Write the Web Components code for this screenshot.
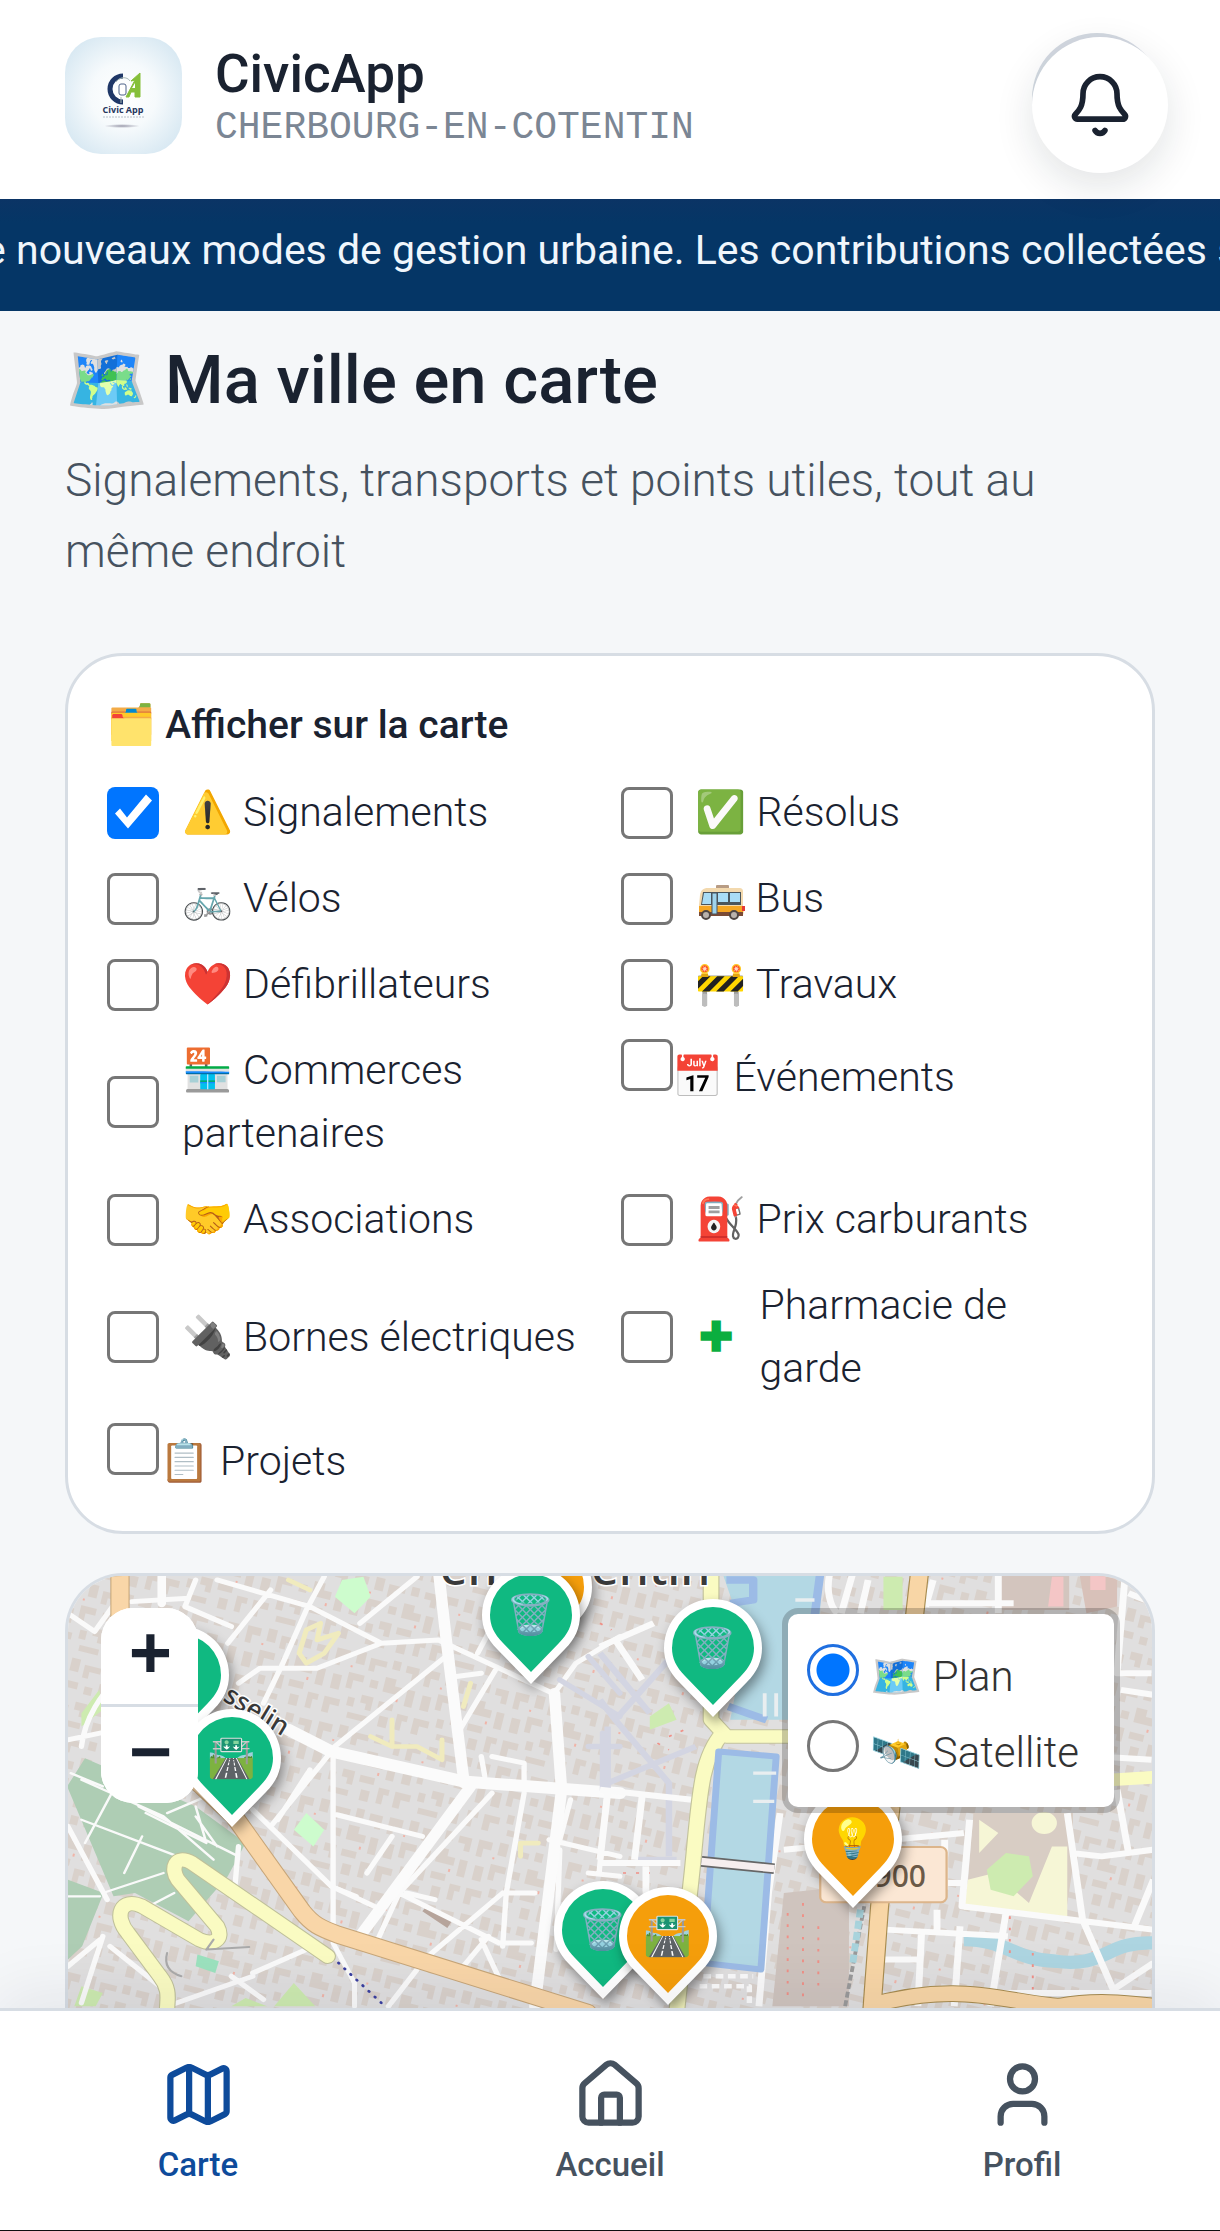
<!DOCTYPE html>
<html lang="fr">
<head>
<meta charset="UTF-8">
<meta name="viewport" content="width=device-width, initial-scale=1">
<title>CivicApp</title>
<style>
  html, body {
    height: 100%;
    margin: 0;
  }

  body {
    font-family: Roboto, "Noto Color Emoji", sans-serif;
    font-weight: 300;
    color: #1a2230;
    background: #f5f7f9;
  }
</style>
</head>
<body>
<civic-app>
  <civic-header slot="header" name="CivicApp" city="CHERBOURG-EN-COTENTIN"></civic-header>
  <news-ticker slot="header">de nouveaux modes de gestion urbaine. Les contributions collectées seront</news-ticker>
  <page-title heading="🗺️ Ma ville en carte">Signalements, transports et points utiles, tout au même endroit</page-title>
  <layer-panel heading="🗂️ Afficher sur la carte">
    <layer-toggle checked>⚠️ Signalements</layer-toggle>
    <layer-toggle>✅ Résolus</layer-toggle>
    <layer-toggle>🚲 Vélos</layer-toggle>
    <layer-toggle><bus-icon></bus-icon> Bus</layer-toggle>
    <layer-toggle>❤️ Défibrillateurs</layer-toggle>
    <layer-toggle>🚧 Travaux</layer-toggle>
    <layer-toggle>🏪 Commerces partenaires</layer-toggle>
    <layer-toggle inline>📅 Événements</layer-toggle>
    <layer-toggle>🤝 Associations</layer-toggle>
    <layer-toggle>⛽ Prix carburants</layer-toggle>
    <layer-toggle>🔌 Bornes électriques</layer-toggle>
    <layer-toggle cross>Pharmacie de garde</layer-toggle>
    <layer-toggle inline>📋 Projets</layer-toggle>
  </layer-panel>
  <city-map>
    <map-pin x="112" y="168"></map-pin>
    <map-pin x="164" y="251">🛣️</map-pin>
    <map-pin x="475" y="80" color="#f59e0b"></map-pin>
    <map-pin x="463" y="108">🗑️</map-pin>
    <map-pin x="645" y="141">🗑️</map-pin>
    <map-pin x="785" y="332" color="#f59e0b">💡</map-pin>
    <map-pin x="535" y="423">🗑️</map-pin>
    <map-pin x="600" y="429" color="#f59e0b">🛣️</map-pin>
  </city-map>
  <tab-bar slot="footer">
    <tab-item icon="map" active>Carte</tab-item>
    <tab-item icon="home">Accueil</tab-item>
    <tab-item icon="user">Profil</tab-item>
  </tab-bar>
</civic-app>

<script>
const icons = {
  map: '<path d="M14.106 5.553a2 2 0 0 0 1.788 0l3.659-1.83A1 1 0 0 1 21 4.619v12.764a1 1 0 0 1-.553.894l-4.553 2.277a2 2 0 0 1-1.788 0l-4.212-2.106a2 2 0 0 0-1.788 0l-3.659 1.83A1 1 0 0 1 3 19.381V6.618a1 1 0 0 1 .553-.894l4.553-2.277a2 2 0 0 1 1.788 0z"/><path d="M15 5.764v15"/><path d="M9 3.236v15"/>',
  home: '<path d="M15 21v-8a1 1 0 0 0-1-1h-4a1 1 0 0 0-1 1v8"/><path d="M3 10a2 2 0 0 1 .709-1.528l7-5.999a2 2 0 0 1 2.582 0l7 5.999A2 2 0 0 1 21 10v9a2 2 0 0 1-2 2H5a2 2 0 0 1-2-2z"/>',
  user: '<path d="M19 21v-2a4 4 0 0 0-4-4H9a4 4 0 0 0-4 4v2"/><circle cx="12" cy="7" r="4"/>',
  bell: '<path d="M10.268 21a2 2 0 0 0 3.464 0"/><path d="M3.262 15.326A1 1 0 0 0 4 17h16a1 1 0 0 0 .74-1.673C19.41 13.956 18 12.499 18 8A6 6 0 0 0 6 8c0 4.499-1.411 5.956-2.738 7.326"/>'
}

const icon = (name, size) => `
  <svg width="${size}" height="${size}" viewBox="0 0 24 24" fill="none" stroke="currentColor"
    stroke-width="2" stroke-linecap="round" stroke-linejoin="round" aria-hidden="true">${icons[name]}</svg>
`

const render = (element, html) => {
  const template = document.createElement('template')
  template.innerHTML = html
  element.attachShadow({mode: "open"}).append(template.content.cloneNode(true))
}

class CivicApp extends HTMLElement {
  constructor() {
    super()
    render(this, `
      <style>
        :host {
          display: flex;
          flex-direction: column;
          height: 100vh;
          box-sizing: border-box;
          border-bottom: 1px solid #111;
        }

        main {
          flex: 1;
          min-height: 0;
          overflow: hidden;
          display: flex;
          flex-direction: column;
          padding: 24px 65px 0;
        }
      </style>
      <slot name="header"></slot>
      <main><slot></slot></main>
      <slot name="footer"></slot>
    `)
  }
}

customElements.define('civic-app', CivicApp)

class CivicHeader extends HTMLElement {
  constructor() {
    super()
    render(this, `
      <style>
        :host {
          display: block;
          background: #fff;
        }

        header {
          display: flex;
          justify-content: space-between;
          align-items: flex-start;
          padding: 37px 52px 26px 65px;
        }

        .brand {
          display: flex;
          align-items: center;
          gap: 33px;
        }

        .logo {
          border-radius: 36px;
        }

        .name {
          padding-top: 3px;
          font-size: 53px;
          font-weight: 500;
          line-height: 61px;
        }

        .city {
          font-family: "Liberation Mono", monospace;
          font-size: 38px;
          font-weight: 400;
          line-height: 46px;
          color: #7b8694;
        }

        button {
          position: relative;
          display: flex;
          align-items: center;
          justify-content: center;
          width: 136px;
          height: 136px;
          padding: 0;
          border: none;
          border-radius: 50%;
          color: #1a2230;
          background: none;
          cursor: pointer;
        }

        /* ring of the resting button, then the raised white disc */
        button::before, button::after {
          content: "";
          position: absolute;
          border-radius: 50%;
        }

        button::before {
          left: 0;
          top: -4px;
          width: 130px;
          height: 130px;
          background: #d3d9e1;
        }

        button::after {
          inset: 0;
          background: #fff;
          box-shadow: 0 13px 39px rgba(20, 30, 45, .12);
        }

        button svg {
          position: relative;
          z-index: 1;
        }
      </style>
      <header>
        <div class="brand">
          <svg class="logo" width="117" height="117" viewBox="0 0 117 117" role="img" aria-label="Civic App">
            <defs>
              <radialGradient id="sky" r=".7">
                <stop offset="0" stop-color="#fff"/>
                <stop offset=".4" stop-color="#f6fafc"/>
                <stop offset="1" stop-color="#cde2ef"/>
              </radialGradient>
              <radialGradient id="shade"><stop offset="0" stop-color="#99a"/><stop offset="1" stop-color="#99a" stop-opacity="0"/></radialGradient>
            </defs>
            <rect width="117" height="117" fill="url(#sky)"/>
            <path d="M58 39a13 13 0 1 0 0 26" fill="none" stroke="#1f3767" stroke-width="5"/>
            <path d="M61 60l9-17-4 1 9-8v24h-5v-5h-4l-2 5z" fill="#85bf3a" stroke="#85bf3a" stroke-width="1"/>
            <path d="M67 51h3v-5z" fill="#fff"/>
            <rect x="54" y="47" width="7" height="11" rx="2" fill="#fff" stroke="#4d6389"/>
            <path d="M51 45c3-5 11-6 14-1M56 60v6" fill="none" stroke="#a8b9b6"/>
            <text x="58" y="76" text-anchor="middle" font-family="Open Sans, sans-serif" font-weight="700" font-size="9" fill="#27375d">Civic App</text>
            <path d="M38 80h41" stroke="#b6c0ca" stroke-dasharray="2 1"/>
            <ellipse cx="57" cy="89" rx="18" ry="2" fill="url(#shade)"/>
          </svg>
          <div>
            <div class="name">${this.getAttribute('name')}</div>
            <div class="city">${this.getAttribute('city')}</div>
          </div>
        </div>
        <button aria-label="Notifications">${icon('bell', 68)}</button>
      </header>
    `)
  }
}

customElements.define('civic-header', CivicHeader)

class NewsTicker extends HTMLElement {
  constructor() {
    super()
    render(this, `
      <style>
        :host {
          display: block;
          overflow: hidden;
          padding: 26px 0 36px;
          font-size: 41px;
          font-weight: 400;
          line-height: 50px;
          white-space: nowrap;
          text-indent: -39px;
          color: #f0f6fc;
          background: linear-gradient(#0b3465, #053666 24px);
        }
      </style>
      <slot></slot>
    `)
  }
}

customElements.define('news-ticker', NewsTicker)

class PageTitle extends HTMLElement {
  constructor() {
    super()
    render(this, `
      <style>
        :host {
          display: block;
          margin-bottom: 66px;
        }

        h1 {
          margin: 0 0 20px;
          font-size: 67px;
          font-weight: 500;
          line-height: 90px;
        }

        p {
          margin: 0;
          font-size: 46px;
          line-height: 71px;
          color: #46525f;
        }
      </style>
      <h1>${this.getAttribute('heading')}</h1>
      <p><slot></slot></p>
    `)
  }
}

customElements.define('page-title', PageTitle)

class LayerPanel extends HTMLElement {
  constructor() {
    super()
    render(this, `
      <style>
        :host {
          display: block;
          margin-bottom: 39px;
          padding: 39px 39px 38px;
          border: 3px solid #d7dde4;
          border-radius: 58px;
          background: #fff;
        }

        h2 {
          margin: 0 0 26px;
          font-size: 39px;
          font-weight: 500;
          line-height: 60px;
        }

        .layers {
          display: grid;
          grid-template-columns: 1fr 1fr;
          gap: 23px 21px;
        }
      </style>
      <h2>${this.getAttribute('heading')}</h2>
      <div class="layers"><slot></slot></div>
    `)
  }
}

customElements.define('layer-panel', LayerPanel)

class LayerToggle extends HTMLElement {
  constructor() {
    super()
    const cross = this.hasAttribute('cross') ? '<span class="cross">✚</span>' : ''
    render(this, `
      <style>
        :host {
          display: grid;
          font-size: 41px;
          line-height: 63px;
        }

        label {
          display: flex;
          align-items: center;
          gap: 23px;
          cursor: pointer;
        }

        :host([inline]) label {
          display: block;
        }

        input {
          appearance: none;
          box-sizing: border-box;
          flex: none;
          width: 52px;
          height: 52px;
          margin: 0;
          border: 3px solid #767676;
          border-radius: 8px;
          background: #fff;
        }

        input:checked {
          border: none;
          background: #0075ff;
        }

        input:checked::before {
          content: "";
          display: block;
          height: 100%;
          background: #fff;
          clip-path: polygon(8px 27px, 13px 22px, 20px 31px, 39px 8px, 45px 14px, 21px 42px);
        }

        .cross {
          flex: none;
          width: 41px;
          text-align: center;
          font-weight: 700;
          color: #0bae3f;
        }
      </style>
      <label><input type="checkbox"${this.hasAttribute('checked') ? ' checked' : ''}>${cross}<span><slot></slot></span></label>
    `)
  }
}

customElements.define('layer-toggle', LayerToggle)

class BusIcon extends HTMLElement {
  constructor() {
    super()
    render(this, `
      <style>
        :host {
          display: inline-block;
          width: 50px;
          height: 37px;
          line-height: 0;
          vertical-align: -9px;
        }
      </style>
      <svg width="50" height="37" viewBox="0 0 50 37" aria-hidden="true">
        <rect x="20" y="1" width="13" height="4" rx="1" fill="#b89c84"/>
        <path d="M4 11c1-5 3-7 8-7h31c3 0 4 1 4 4v19H3v-6z" fill="#f3d9ae"/>
        <path d="M3 22h45l-1 9H3z" fill="#f5a623"/>
        <path d="M3 28h44v4H3z" fill="#7a4a35"/>
        <path d="M7 8h38v13H5z" fill="#4a555c"/>
        <path d="M8 9h7v11H6zM22 9h10v9H22zM34 9h10v9H34z" fill="#a9dcf5"/>
        <rect x="16" y="9" width="5" height="21" fill="#9fd3ec" stroke="#4a555c"/>
        <rect x="46" y="22" width="3" height="5" fill="#e53935"/>
        <g fill="#b9b2ac" stroke="#4e4643" stroke-width="2">
          <circle cx="10" cy="31" r="4"/>
          <circle cx="38" cy="31" r="4"/>
        </g>
      </svg>
    `)
  }
}

customElements.define('bus-icon', BusIcon)

class MapPin extends HTMLElement {
  constructor() {
    super()
    render(this, `
      <style>
        :host {
          position: absolute;
          left: ${this.getAttribute('x')}px;
          top: ${this.getAttribute('y')}px;
          width: 98px;
          height: 118px;
          transform: translate(-50%, -100%);
          display: grid;
          filter: drop-shadow(3px 6px 6px rgba(0, 0, 0, .4));
        }

        svg, span {
          grid-area: 1 / 1;
        }

        span {
          font-size: 39px;
          line-height: 98px;
          text-align: center;
        }
      </style>
      <svg viewBox="0 0 98 118" aria-hidden="true">
        <path d="M49 118L15 83C5 73 0 62 0 49a49 49 0 0 1 98 0c0 13-5 24-15 34z" fill="#fff"/>
        <path d="M49 106L21 77C12 68 8 59 8 49a41 41 0 0 1 82 0c0 10-4 19-13 28z" fill="${this.getAttribute('color') || '#10b981'}"/>
      </svg>
      <span><slot></slot></span>
    `)
  }
}

customElements.define('map-pin', MapPin)

const streets = `
  <svg class="streets" viewBox="0 0 1084 432" preserveAspectRatio="xMinYMin slice" aria-hidden="true">
    <defs>
      <pattern id="blocks" width="92" height="76" patternUnits="userSpaceOnUse" patternTransform="rotate(14)">
        <path d="M3 4h14v8H9v9H3zM24 2h9v13h-9zM38 6h17v6H44v7h-6zM61 3h8v9h-8zM75 5h13v14h-6v-7h-7zM5 30h9v15H5zM20 25h16v7H26v9h-6zM43 27h8v8h-8zM57 21h11v7h8v8H57zM81 28h8v17h-8zM2 54h16v7H9v9H2zM25 49h7v9h-7zM38 44h12v14h-6v-6h-6zM56 46h15v7H56zM60 60h9v11h-9zM77 54h11v6h-5v10h-6zM28 64h20v6H28z" fill="#d9d1cb"/>
        <path d="M20 18h2v2h-2zM72 40h2v3h-2z" fill="#f0b4a8"/>
      </pattern>
    </defs>
    <rect width="1084" height="432" fill="#e0dfdf"/>
    <rect width="1084" height="432" fill="url(#blocks)"/>

    <g transform="translate(-8 -16) scale(.357 .333)" fill="none" stroke-linecap="round" stroke-linejoin="round">
      <path d="M70 595L380 740 520 850 470 950 360 1085 210 1000 150 1010 20 680zM22 960l100 40-60 160-40 40z" fill="#aecdb4"/>
      <path d="M790 60l60-10 20 60-45 50-55-50zM690 760l50 50-30 50-55-50z" fill="#cdfccd"/>
      <path d="M600 1340l55-70 60 70zM40 1340l20-60 60 20-20 40zM480 1340l40-25 60 25zM60 460l50-70 10 60-60 50z" fill="#cdebb0"/>
      <path d="M670 280l20-70 40-20-10 50 60-20-40 60-50 30zM870 530l60 30 0-80m0 80l70 0 70 40 0-60M1290 850h50M1290 850v40M1130 440l20-70M640 60l60 30" stroke="#f0ebbe" stroke-width="14"/>
      <path d="M1030 1035l70 45-15 25-70-50z" fill="#b6a49b"/>
      <path d="M385 1185l60 20-10 35-55-20z" fill="#9ce2bf"/>
      <g stroke="#fafafa" stroke-width="15">
        <path d="M22 160l75 55 60-90M200 125l160-10M380 60l-30 80 130 60M470 250L590 90M440 60l260 80 200 110 160-10 320 160M500 370l60-45 160 0 180-75M740 50l-50 100-70 170-50 110M840 190L1000 50M1080 290L770 560M760 575L590 800M765 575v560M540 750l220 230 120 60M775 765l240 65M1220 330l-100 180M1170 280l50-100M1385 400l60-90 123-80M22 540l90-20M22 800l110 220M60 560c10-90 60-160 90-190M930 830l-70 110M1300 700l-50 300-10 160M950 1000l280 150h90M1370 840l198 50M1250 1000h80M1210 700L950 1000l-60 140M1050 1020l-80 -20M1240 1000l-220 200M1180 1140l60 140M1400 870l-10 300M1530 720l-20 220M1430 720l-30 120M1130 1220l70-90M540 1240l150-70M300 1340l240-90M140 1160l140 120M60 1330l60-200M480 1250l90 70M1000 1230l-80 110M1480 940l88 10M500 860l-10 120M1110 350l70 -10M1180 590l10 60M1210 590l90 20v60M220 1180l50 80M22 1220l90-80M700 630l-90 150"/>
        <path d="M60 660l230 110 140 130M220 740l280 150M60 780L330 890M150 690L70 850M230 830l-50 110M380 770l60 90M120 1000l170-60M300 760l110-50M240 760l170 90-30-110M320 1000l-90 50M22 1010h90M30 640l90 40" stroke-width="7"/>
        <path d="M760 980l70 30M765 1150l60 120v70" stroke-width="14"/>
      </g>
      <g stroke="#fbfbfb">
        <path d="M640 510l120 65 370 90 438 35" stroke-width="36"/>
        <path d="M1060 30l22 210 50 430M1385 400l20 290-75 650M1150 680L840 1130" stroke-width="32"/>
        <path d="M285 40v90" stroke-width="24"/>
      </g>
      <path d="M1400 360l168 110M1480 290l88 110M1520 520v170M1480 560h88" stroke="#d3d5e2" stroke-width="16"/>
      <path d="M750 1190L370 910c-50-30-60 20-40 50l110 140c20 40-10 60-50 40L230 1040c-60-30-80 30-40 80l90 130c30 40 20 70 20 100" stroke="#bfc09a" stroke-width="46"/>
      <path d="M168 30v140l20 300 300 300 190 285c30 40 50 50 100 70l700 235" stroke="#c7a679" stroke-width="54"/>
      <path d="M168 30v140l20 300 300 300 190 285c30 40 50 50 100 70l700 235" stroke="#f9d6a8" stroke-width="48"/>
      <path d="M750 1190L370 910c-50-30-60 20-40 50l110 140c20 40-10 60-50 40L230 1040c-60-30-80 30-40 80l90 130c30 40 20 70 20 100" stroke="#fafbc2" stroke-width="40"/>
      <path d="M780 1210L900 1330" stroke="#3a3fa0" stroke-width="8" stroke-dasharray="2 22"/>
      <path d="M410 1170l120-8M410 1170l20-30M300 1180c-10 40 10 60 40 70" stroke="#aaa" stroke-width="6"/>
    </g>

    <g transform="translate(532 -16) scale(.383 .333)" fill="none" stroke-linejoin="round">
      <path d="M320 40h260l-20 440H340l40-240z" fill="#b3d8e4"/>
      <path d="M575 40l-15 130M330 60h70v60l-60 10M335 440l100 40" stroke="#9cbbe6" stroke-width="22"/>
      <path d="M1045 30h180v120h-180z" fill="#d3c5be"/>
      <path d="M1250 30h100v110l-80 20z" fill="#d8c1b9"/>
      <path d="M1280 30h40v60h-40zM1180 50h30v90h-40z" fill="#f4c6c6"/>
      <path d="M740 50h50v100h-50zM130 470l50-40 20 50-70 30z" fill="#cdebb0"/>
      <path d="M975 760h260v160l-20 150-260-20z" fill="#d8cdc4"/>
      <path d="M960 960l70-20 90 90 60-170 40 0 0 210-270-20zM990 780l50 40-50 60z" fill="#f6f6d6"/>
      <path d="M1060 880l60 10 10 60-50 60-60-20-10-60z" fill="#cdebb0"/>
      <circle cx="1160" cy="790" r="26" fill="#f6f6d6" stroke="#f6f6d6" stroke-width="14"/>
      <path d="M480 1000l170-20v360H450z" fill="#cfc4be"/>
      <path d="M950 1140c110 0 130 60 240 65 130 20 130-60 255-55" stroke="#add5e1" stroke-width="40"/>
      <g stroke="#d3d5e2" stroke-width="17">
        <path d="M0 420l40 60L210 260M0 280l130 180M20 670l230-110M40 480l140 190v220M90 900h110M20 500v200"/>
      </g>
      <g stroke="#fafafa" stroke-width="18">
        <path d="M0 690l240 30M20 700L0 900M110 710L90 900M40 240l70 120M0 260l140-70M0 910h210M120 920v170M0 1040l150 40M480 870l470-50M470 760l-30 240-25 340M840 130h240M1040 40v120M870 60l-20 80M1370 60l-20 280h90M1360 390l85 15M1350 690l30 190M1220 760l40 320 80 210 105-80M1230 880l80 10 135-20M965 780l-20 260 500 70M745 1110l320 20M1060 1060l-40 280M940 1100l-15 240M840 1110l-10 230M880 1050v70M1445 960l-50 140M1040 1300h400M740 1200h100M600 40c-10 50 0 100 20 120M660 40l-30 120M700 60l-20 100M1380 100l65 30M1300 590l140 10M1200 540l50 0M900 840v150M850 970h100"/>
      </g>
      <path d="M290 30v450l40 50h170M320 520c-60 80-60 200-80 420l-40 420" stroke="#c3c39c" stroke-width="44"/>
      <path d="M1340 660l110-8" stroke="#fafbc2" stroke-width="38"/>
      <path d="M290 30v450l40 50h170M320 520c-60 80-60 200-80 420l-40 420" stroke="#fafbc2" stroke-width="38"/>
      <path d="M310 575l150 15-20 320-20 320-150-20z" fill="#b3d8e4" stroke="#9cbbe6" stroke-width="18"/>
      <path d="M400 640h60M400 725h55M430 400v70M460 400v70M510 120h50" stroke="#e9eef0" stroke-width="10"/>
      <path d="M265 905l190 22" stroke="#666" stroke-width="32"/>
      <path d="M265 905l190 22" stroke="#f6eeee" stroke-width="22"/>
      <path d="M270 1250h130M260 1280h130v50" stroke="#fafafa" stroke-width="14" stroke-dasharray="20 12"/>
      <path d="M690 1040l-50 300" stroke="#9a9a9a" stroke-width="10" stroke-dasharray="18 8"/>
      <path d="M680 1050l-20 160" stroke="#a8d3dc" stroke-width="18" stroke-dasharray="24 10"/>
      <path d="M835 30l-15 150M760 740l-30 300-20 310M700 1340c240-80 360-10 500 0 90-20 170-10 250 0" stroke="#a88c50" stroke-width="50"/>
      <path d="M835 30l-15 150M760 740l-30 300-20 310M700 1340c240-80 360-10 500 0 90-20 170-10 250 0" stroke="#f8d6a6" stroke-width="44"/>
      <path d="M490 1060v260M530 1030v290M570 1100v200M180 530l40-20M150 550l30 20M0 190l30 20M1070 1070v110M1130 1180v120M60 940h70" stroke="#ef9087" stroke-width="5" stroke-dasharray="8 26"/>
      <rect x="575" y="862" width="330" height="166" rx="16" fill="#fbe7d4" stroke="#dcb58b" stroke-width="6"/>
    </g>

    <g font-family="Noto Sans, sans-serif" fill="#3a3a3a" stroke="#fff" stroke-width="3" paint-order="stroke">
      <text x="372" y="9" font-size="48" font-weight="500">en-Cotentin</text>
      <text x="154" y="124" font-size="26" font-weight="500" transform="rotate(31 154 124)">sselin</text>
      <text x="858" y="311" font-size="30" font-weight="500" text-anchor="end" fill="#6b5a48" stroke="none">D 900</text>
    </g>
  </svg>
`

class CityMap extends HTMLElement {
  constructor() {
    super()
    render(this, `
      <style>
        :host {
          position: relative;
          flex: 1;
          min-height: 0;
          display: block;
          overflow: hidden;
          border: 3px solid #d7dde4;
          border-bottom: none;
          border-radius: 58px 58px 0 0;
        }

        .streets {
          display: block;
          width: 100%;
          height: 100%;
        }

        .zoom {
          position: absolute;
          left: 33px;
          top: 32px;
          width: 97px;
          border-radius: 32px;
          overflow: hidden;
          background: #fff;
        }

        .zoom button {
          display: block;
          width: 100%;
          height: 96px;
          padding: 4px 0 0 2px;
          border: none;
          font: 700 74px/92px "Liberation Mono", monospace;
          color: #1a2230;
          background: #fff;
          cursor: pointer;
        }

        .zoom button + button {
          height: 99px;
          border-top: 3px solid #d7dde4;
        }

        fieldset {
          position: absolute;
          right: 32px;
          top: 32px;
          display: grid;
          gap: 10px;
          margin: 0;
          padding: 30px 35px 21px 19px;
          border: 6px solid rgba(0, 0, 0, .2);
          border-radius: 16px;
          background: #fff;
          background-clip: padding-box;
          font-size: 42px;
          line-height: 66px;
          color: #333;
        }

        label {
          display: flex;
          gap: 11px;
          cursor: pointer;
        }

        input {
          appearance: none;
          box-sizing: border-box;
          width: 52px;
          height: 52px;
          margin: 0;
          border: 3px solid #767676;
          border-radius: 50%;
          background: #fff;
        }

        input:checked {
          border-color: #1f6fe0;
          background: radial-gradient(#0075ff 16px, #fff 17px);
        }
      </style>
      ${streets}
      <slot></slot>
      <div class="zoom">
        <button aria-label="Zoom avant">+</button>
        <button aria-label="Zoom arrière">−</button>
      </div>
      <fieldset aria-label="Fond de carte">
        <label><input type="radio" name="base" checked>🗺️ Plan</label>
        <label><input type="radio" name="base">🛰️ Satellite</label>
      </fieldset>
    `)
  }
}

customElements.define('city-map', CityMap)

class TabBar extends HTMLElement {
  constructor() {
    super()
    render(this, `
      <style>
        :host {
          position: relative;
          display: block;
          border-top: 3px solid #d7dde4;
          background: #fff;
          box-shadow: 0 -12px 60px rgba(20, 30, 45, .08);
        }

        nav {
          display: flex;
          justify-content: space-between;
          padding: 46px 98px 44px;
        }
      </style>
      <nav><slot></slot></nav>
    `)
  }
}

customElements.define('tab-bar', TabBar)

class TabItem extends HTMLElement {
  constructor() {
    super()
    render(this, `
      <style>
        :host {
          display: block;
          width: 200px;
        }

        a {
          display: flex;
          flex-direction: column;
          align-items: center;
          gap: 12px;
          font-size: 33px;
          font-weight: 500;
          line-height: 42px;
          text-decoration: none;
          color: #46525f;
        }

        :host([active]) a {
          color: #0e4b9b;
        }
      </style>
      <a href="#">${icon(this.getAttribute('icon'), 75)}<span><slot></slot></span></a>
    `)
  }
}

customElements.define('tab-item', TabItem)
</script>
</body>
</html>
